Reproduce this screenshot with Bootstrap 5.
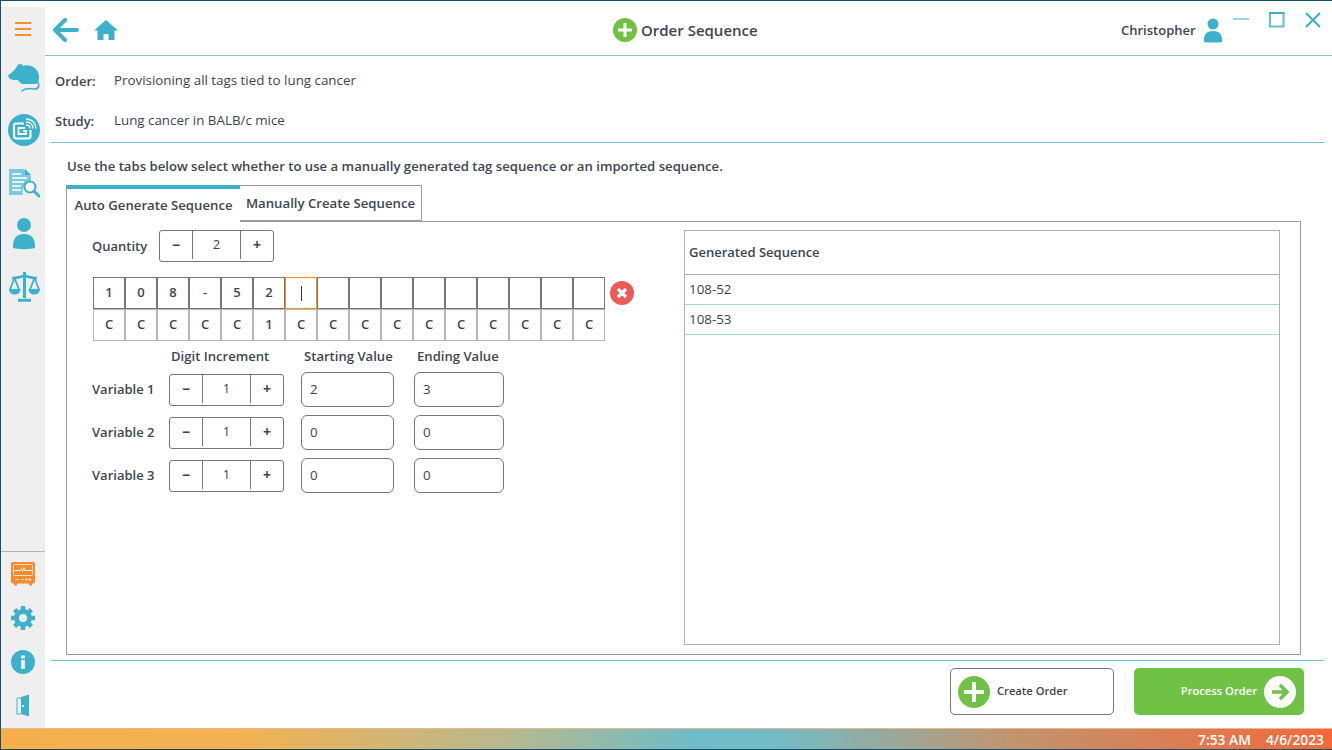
<!DOCTYPE html>
<html lang="en">
<head>
<meta charset="utf-8">
<title>Order Sequence</title>
<link rel="stylesheet" href="https://cdn.jsdelivr.net/npm/bootstrap@5.3.0/dist/css/bootstrap.min.css">
<style>
html,body{height:100%;overflow:hidden}
body{font-family:"Open Sans","Noto Sans",sans-serif;font-size:13.35px;color:#3d4650;background:#fff}
.win{width:1332px;height:750px;border:1px solid #17506d;border-width:1px 0 1px 1px;display:flex;flex-direction:column}
.work{flex:1;min-height:0;display:flex}
.rail{width:44px;background:#efefef;margin-top:6px;display:flex;flex-direction:column;align-items:center;flex:none}
.rail svg{display:block}
.rail-top{display:flex;flex-direction:column;align-items:center;flex:1;padding-left:2px}
.rail-top .burger{margin-left:-2px}
.rail-bot{border-top:1px solid #b4b4b4;width:100%;height:177px;display:flex;flex-direction:column;align-items:center;padding-top:10px}
.burger{width:16px;height:14px;margin-top:15px;border-top:2px solid #f7901e;border-bottom:2px solid #f7901e;position:relative}
.burger::after{content:"";position:absolute;left:0;right:0;top:4px;height:2px;background:#f7901e}
.gap-mouse{margin-top:27px}.gap-tag{margin-top:21px}.gap-doc{margin-top:22px}.gap-person{margin-top:20px}.gap-scale{margin-top:21px}
.gap-gear{margin-top:20px}.gap-info{margin-top:20px}.gap-door{margin-top:20px}
.main{flex:1;min-width:0;display:flex;flex-direction:column}
.head{height:55px;border-bottom:1px solid #86c4d6;display:flex;align-items:flex-start;position:relative;flex:none}
.head-nav{display:flex;align-items:center;gap:15px;padding:17px 0 0 8px}
.head-title{position:absolute;left:568px;top:17px;display:flex;align-items:center;gap:4px;font-size:15px;font-weight:600;line-height:24px}
.head-user{margin-left:auto;display:flex;align-items:flex-start;width:211px;padding-top:17px;font-weight:600;font-size:13px}
.head-user span{line-height:24px}
.winbtns{display:flex;margin-left:11px;gap:20px;margin-top:-6px}
.meta{height:87px;margin-left:6px;margin-right:8px;border-bottom:1px solid #6cc3d6;flex:none;padding-left:4px}
.meta-row{display:flex;height:40px;align-items:center;line-height:1}
.meta-row:first-child{margin-top:5px}
.meta-row b{width:59px;font-weight:600;flex:none;font-size:13px}
.intro{margin:14px 0 0 22px;font-weight:600;line-height:18px;height:18px;font-size:13.15px}
.tabs{display:flex;margin:10px 0 0 21px;height:37px;position:relative;z-index:1;align-items:flex-start}
.tabbtn{background:#fff;font-weight:600;font-size:13.2px;white-space:nowrap;text-align:center}
.tabbtn.on{width:174px;height:37px;border-top:4px solid #3cb1cc;border-left:1px solid #9c9c9c;padding-top:7px;line-height:18px}
.tabbtn.off{width:182px;height:36px;border:1px solid #9c9c9c;border-left:0;line-height:34px}
.panel{margin:-1px 0 0 21px;width:1235px;height:434px;border:1px solid #9c9c9c;display:flex;flex:none}
.leftside{width:617px;flex:none;padding:8px 0 0 25px}
.qty{display:flex;align-items:center;font-weight:600;font-size:13px}
.qty label{width:67px;margin-top:2px}
.stepper{display:flex;width:115px;height:32px;border:1px solid #777;border-radius:3px;align-items:stretch;background:#fff;line-height:28px;text-align:center}
.stepper i{font-style:normal;font-weight:700;width:32px;font-size:14px;flex:none}
.stepper span{flex:1;font-weight:400;border-left:1px solid #777;border-right:1px solid #777;margin-bottom:2px;font-size:13px;line-height:26px}
.seqwrap{display:flex;margin:15px 0 0 1px;align-items:flex-start}
.seqgrid{display:grid;grid-template-columns:repeat(16,32px);grid-auto-rows:32px;width:513px;background:#fff}
.sc{border:1px solid #777;display:flex;align-items:center;justify-content:center;font-weight:600;font-size:13px}
.sc.low{border-color:#b7b7b7}
.sc.cur{border-color:#f7901e}
.sc.cur::after{content:"";width:1px;height:15px;background:#333}
.xbtn{margin:4px 0 0 4px}
.vars{display:grid;grid-template-columns:77px 132px 113px 90px;grid-template-rows:23px repeat(3,43px);margin-top:4px}
.vars .hd{font-weight:600;line-height:22px;font-size:13.1px}
.vars .nm{font-weight:600;display:flex;align-items:center;font-size:13px}
.vars .cel{display:flex;align-items:center}
.fld{height:35px;border:1px solid #777;border-radius:6px;padding-left:8px;display:flex;align-items:center;background:#fff}
.f1{width:93px}.f2{width:90px}
.pad2{padding-left:2px}.pad3{padding-left:3px}
.genbox{width:596px;height:415px;margin:8px 0 0 0;border:1px solid #b0b0b0}
.genhd{height:44px;line-height:43px;padding-left:4px;font-weight:600;border-bottom:1px solid #b0b0b0;font-size:13px}
.genrow{height:30px;line-height:29px;padding-left:4px;border-bottom:1px solid #a4d4e0}
.foot{margin:5px 8px 0 6px;border-top:1px solid #62c9d6;flex:1;display:flex;justify-content:flex-end;align-items:flex-start;padding:7px 20px 0 0;gap:20px}
.act{height:47px;border-radius:5px;display:flex;align-items:center;font-weight:600;font-size:11.2px}
.act.a1{width:164px;border:1px solid #777;padding-left:7px;gap:7px}
.act.a2{width:170px;background:#6fc244;color:#fff;justify-content:flex-end;padding-right:8px;gap:7px}
.tray{height:21px;flex:none;background:linear-gradient(90deg,#f5b04c 0%,#f3b253 18%,#b8b88e 38%,#6fbcc8 52%,#72bcc6 58%,#c2946e 76%,#f4683a 100%);color:#fff;font-weight:600;font-size:13.8px;display:flex;justify-content:flex-end;gap:15px;padding-right:8px;line-height:21px;border-top:1px solid #e6b98a}
</style>
</head>
<body>
<div class="win">
  <div class="work">
    <aside class="rail">
      <div class="rail-top">
        <div class="burger"></div>
        <svg class="gap-mouse" width="33" height="30" viewBox="0 0 33 30"><path fill="#3cb1cc" d="M0 12.500C3 10 6 8 8 5c1-2 2-4 4-4s3 1 3 2c2-1 5-1 8 0 5 2 8 6 8 11 0 4-1 7-4 7H15c-2 0-4-2-5-4-3 0-8 0-9-2z"/><path fill="none" stroke="#3cb1cc" stroke-width="1.700" stroke-linecap="round" d="M29.500 19c2.500 3 1.500 7-3 7-3.500 0-6-1-9 0-1.500.5-2.500 1-3.500 2"/></svg>
        <svg class="gap-tag" width="32" height="32" viewBox="0 0 32 32"><circle cx="16" cy="16" r="16" fill="#3cb1cc"/><g fill="none" stroke="#fff"><path stroke-width="2.200" d="M16 9.500H8a2 2 0 0 0-2 2V22a2.500 2.500 0 0 0 2.500 2.500H20a2.500 2.500 0 0 0 2.500-2.500v-6"/><path stroke-width="1.800" d="M17 14h-6.500v6H18v-3h-3"/><path stroke-width="1.300" d="M18 11c2.500 0 4 1.500 4 3.500M18 8c4.500 0 7 3 7 6.500M18 5c6 0 10 4 10 9.500"/></g></svg>
        <svg class="gap-doc" width="32" height="30" viewBox="0 0 32 30"><path fill="#7cc9dc" d="M1 1h15l7 7v7a9 9 0 0 0-8 12H1z"/><path fill="#3cb1cc" d="M17 1v6h6z"/><g stroke="#fff" stroke-width="1.300"><path d="M4 6h9M4 10h15M4 14h12M4 18h9M4 22h9"/></g><circle cx="22" cy="19" r="5.500" fill="#fff" stroke="#3cb1cc" stroke-width="2"/><path d="M26 23l5 5" stroke="#3cb1cc" stroke-width="3" stroke-linecap="round"/></svg>
        <svg class="gap-person" width="24" height="32" viewBox="0 0 24 32"><circle cx="12" cy="7" r="7" fill="#3cb1cc"/><path fill="#3cb1cc" d="M1 30c-.5-9 3-14 11-14s11.500 5 11 14c-5 1.500-17 1.500-22 0z"/></svg>
        <svg class="gap-scale" width="31" height="31" viewBox="0 0 31 31"><g fill="none" stroke="#3cb1cc"><path stroke-width="2.600" d="M3 7c5 .5 9-2 12.500-2s7.500 2.500 12.500 2"/><path stroke-width="3" d="M15.500 1v26M9 29.200h13"/><path stroke-width="1.800" d="M5.500 7L1 18.500M5.500 7L10 18.500M25.500 7L21 18.500M25.500 7L30 18.500"/></g><path fill="#3cb1cc" d="M0 18h11.500c0 3.500-2.500 5.500-5.700 5.500S0 21.500 0 18zM19.500 18H31c0 3.500-2.500 5.500-5.700 5.500S19.500 21.500 19.500 18z"/></svg>
      </div>
      <div class="rail-bot">
        <svg width="24" height="24" viewBox="0 0 24 24"><rect width="24" height="21.500" rx="2" fill="#f68b2c"/><path d="M3 21h3v2.500H3zM18 21h3v2.500h-3z" fill="#f68b2c"/><rect x="2.500" y="2.500" width="19" height="11" rx="1" fill="none" stroke="#fde0c2" stroke-width="1"/><path d="M3 8.500h6l1.500-2 1 3 1.500-4 1 3h7" fill="none" stroke="#fff" stroke-width="1"/><path d="M4 17.500h4M10 17.500h3" stroke="#fde0c2"/><circle cx="15.500" cy="17.500" r="1.100" fill="#fff"/><circle cx="19" cy="17.500" r="1.100" fill="#fff"/></svg>
        <svg class="gap-gear" width="24" height="24" viewBox="0 0 24 24"><circle cx="12" cy="12" r="6.500" fill="none" stroke="#3cb1cc" stroke-width="5"/><g stroke="#3cb1cc" stroke-width="4.500"><path d="M12 0v4.500M12 19.500V24M0 12h4.500M19.500 12H24M3.600 3.600l3 3M17.400 17.400l3 3M3.600 20.400l3-3M17.400 6.600l3-3"/></g></svg>
        <svg class="gap-info" width="24" height="24" viewBox="0 0 24 24"><circle cx="12" cy="12" r="12" fill="#3cb1cc"/><rect x="10.200" y="10" width="3.600" height="9" fill="#fff"/><rect x="10.200" y="5.500" width="3.600" height="3" fill="#fff"/></svg>
        <svg class="gap-door" width="14" height="24" viewBox="0 0 14 24"><path d="M1 4h4M1 4v16h4" fill="none" stroke="#7cc9dc" stroke-width="1.500"/><path d="M5 3l8-2.500v22L5 20z" fill="#3cb1cc"/><circle cx="7" cy="12" r="1" fill="#fff"/></svg>
      </div>
    </aside>
    <main class="main">
      <header class="head">
        <div class="head-nav">
          <svg width="26" height="24" viewBox="0 0 26 24"><path d="M12 2L2 12l10 10M3 12h21" fill="none" stroke="#3cb1cc" stroke-width="4" stroke-linecap="round" stroke-linejoin="round"/></svg>
          <svg width="24" height="22" viewBox="0 0 24 22"><path fill="#3cb1cc" d="M12 1L0 11.500h3.500V21h6v-6h5v6h6v-9.500H24z"/></svg>
        </div>
        <div class="head-title">
          <svg width="24" height="24" viewBox="0 0 24 24"><circle cx="12" cy="12" r="12" fill="#6fc244"/><path d="M12 5v14M5 12h14" stroke="#fff" stroke-width="3"/></svg>
          Order Sequence
        </div>
        <div class="head-user">
          <span>Christopher</span>
          <svg class="ms-2" width="18" height="25" viewBox="0 0 18 25"><circle cx="9" cy="6" r="5.500" fill="#3cb1cc"/><path fill="#3cb1cc" d="M0 24c-.5-7 2-11 9-11s9.500 4 9 11c-4 .8-14 .8-18 0z"/></svg>
          <div class="winbtns">
            <svg width="16" height="16" viewBox="0 0 16 16"><path d="M0 7h16" stroke="#9ad6e4" stroke-width="2"/></svg>
            <svg width="16" height="16" viewBox="0 0 16 16"><path d="M1 1h13.500v13.500H1z" fill="none" stroke="#5fc0d6" stroke-width="2"/><path d="M0 1h15.500" stroke="#3cb1cc" stroke-width="2"/></svg>
            <svg width="16" height="16" viewBox="0 0 16 16"><path d="M1 1l14 14M15 1L1 15" stroke="#3cb1cc" stroke-width="2"/></svg>
          </div>
        </div>
      </header>
      <section class="meta">
        <div class="meta-row"><b>Order:</b><span>Provisioning all tags tied to lung cancer</span></div>
        <div class="meta-row"><b>Study:</b><span>Lung cancer in BALB/c mice</span></div>
      </section>
      <div class="intro">Use the tabs below select whether to use a manually generated tag sequence or an imported sequence.</div>
      <div class="tabs">
        <div class="tabbtn on">Auto Generate Sequence</div>
        <div class="tabbtn off">Manually Create Sequence</div>
      </div>
      <section class="panel">
        <div class="leftside">
          <div class="qty"><label>Quantity</label>
            <div class="stepper"><i>−</i><span>2</span><i>+</i></div>
          </div>
          <div class="seqwrap">
            <div class="seqgrid">
              <div class="sc">1</div><div class="sc">0</div><div class="sc">8</div><div class="sc">-</div><div class="sc">5</div><div class="sc">2</div><div class="sc cur"></div><div class="sc"></div><div class="sc"></div><div class="sc"></div><div class="sc"></div><div class="sc"></div><div class="sc"></div><div class="sc"></div><div class="sc"></div><div class="sc"></div>
              <div class="sc low">C</div><div class="sc low">C</div><div class="sc low">C</div><div class="sc low">C</div><div class="sc low">C</div><div class="sc low">1</div><div class="sc low">C</div><div class="sc low">C</div><div class="sc low">C</div><div class="sc low">C</div><div class="sc low">C</div><div class="sc low">C</div><div class="sc low">C</div><div class="sc low">C</div><div class="sc low">C</div><div class="sc low">C</div>
            </div>
            <svg class="xbtn" width="24" height="24" viewBox="0 0 24 24"><circle cx="12" cy="12" r="12" fill="#ee5a55"/><path d="M8 8l8 8M16 8l-8 8" stroke="#fff" stroke-width="3.200"/></svg>
          </div>
          <div class="vars">
            <div class="hd"></div><div class="hd pad2">Digit Increment</div><div class="hd pad3">Starting Value</div><div class="hd pad3">Ending Value</div>
            <div class="nm">Variable 1</div><div class="cel"><div class="stepper"><i>−</i><span>1</span><i>+</i></div></div><div class="cel"><div class="fld f1">2</div></div><div class="cel"><div class="fld f2">3</div></div>
            <div class="nm">Variable 2</div><div class="cel"><div class="stepper"><i>−</i><span>1</span><i>+</i></div></div><div class="cel"><div class="fld f1">0</div></div><div class="cel"><div class="fld f2">0</div></div>
            <div class="nm">Variable 3</div><div class="cel"><div class="stepper"><i>−</i><span>1</span><i>+</i></div></div><div class="cel"><div class="fld f1">0</div></div><div class="cel"><div class="fld f2">0</div></div>
          </div>
        </div>
        <div class="genbox">
          <div class="genhd">Generated Sequence</div>
          <div class="genrow">108-52</div>
          <div class="genrow">108-53</div>
        </div>
      </section>
      <footer class="foot">
        <div class="act a1"><svg width="32" height="32" viewBox="0 0 32 32"><circle cx="16" cy="16" r="16" fill="#6fc244"/><path d="M16 6v20M6 16h20" stroke="#fff" stroke-width="4"/></svg>Create Order</div>
        <div class="act a2">Process Order<svg width="32" height="32" viewBox="0 0 32 32"><circle cx="16" cy="16" r="16" fill="#fff"/><path d="M8 16h14M16 9l7 7-7 7" fill="none" stroke="#6fc244" stroke-width="3.500"/></svg></div>
      </footer>
    </main>
  </div>
  <div class="tray"><span>7:53 AM</span><span>4/6/2023</span></div>
</div>
</body>
</html>
